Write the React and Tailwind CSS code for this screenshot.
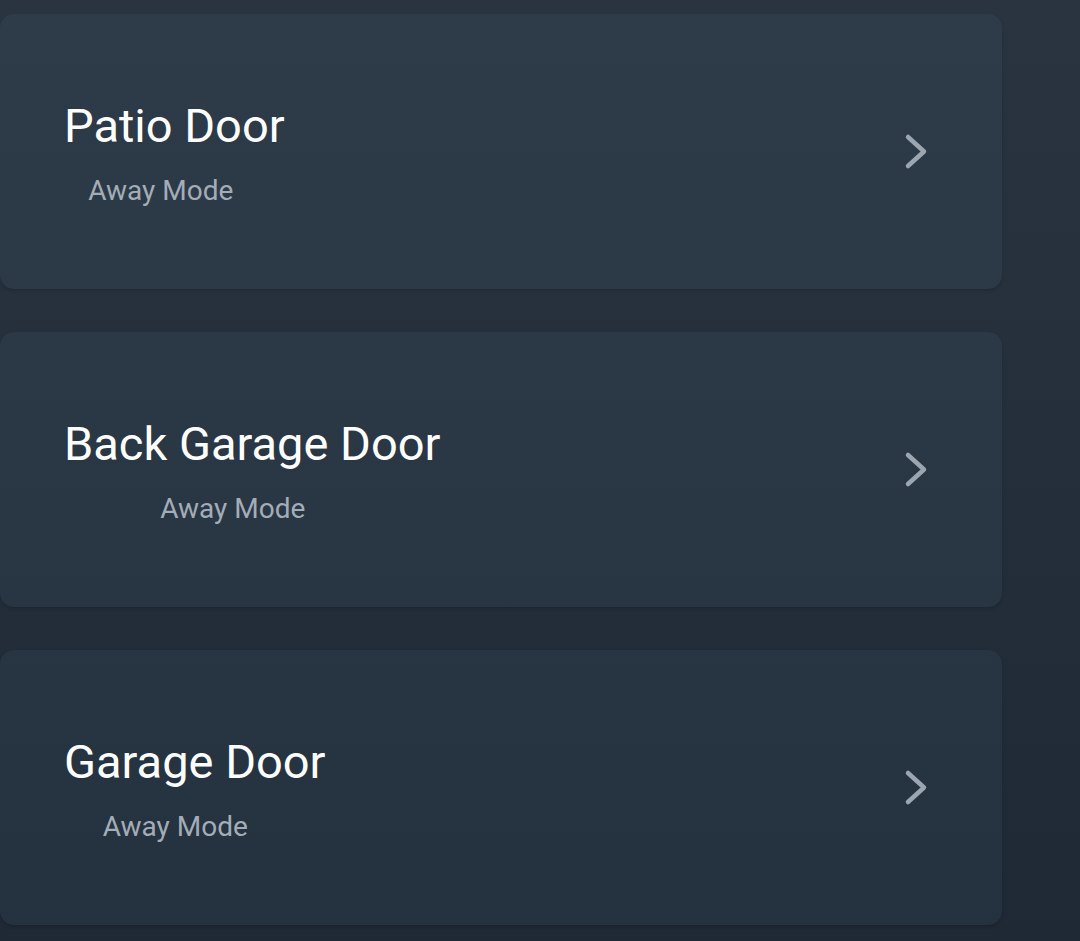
import React from 'react';

const doors = [
  { name: 'Patio Door', mode: 'Away Mode', pad: 'pr-[27px]' },
  { name: 'Back Garage Door', mode: 'Away Mode', pad: 'pr-[39px]' },
  { name: 'Garage Door', mode: 'Away Mode', pad: 'pr-[39px]' },
];

function Chevron() {
  return (
    <svg width="30" height="40" viewBox="0 0 30 40" fill="none">
      <path
        d="M6 5 L22 19.5 L6 34"
        stroke="#9ba6b0"
        strokeWidth="4.5"
        strokeLinecap="round"
        strokeLinejoin="round"
      />
    </svg>
  );
}

function DoorCard({ door }) {
  return (
    <div className="h-[275px] w-[1002px] rounded-[14px] bg-[#5a8399]/10 shadow-[0_2px_3px_rgba(0,0,0,0.15)] flex items-center justify-between pl-[64px] pr-[70px]">
      <div className="flex flex-col items-center mt-[3px]">
        <div className="text-[47px] leading-[56px] text-white">{door.name}</div>
        <div className={`text-[28px] leading-[36px] mt-[19px] text-[#a3adb7] ${door.pad}`}>
          {door.mode}
        </div>
      </div>
      <Chevron />
    </div>
  );
}

export default function App() {
  return (
    <div className="min-h-[941px] bg-gradient-to-b from-[#2a3440] to-[#1f2935] pt-[14px] flex flex-col gap-[43px] font-['Roboto',sans-serif]">
      {doors.map((d) => (
        <DoorCard key={d.name} door={d} />
      ))}
    </div>
  );
}
